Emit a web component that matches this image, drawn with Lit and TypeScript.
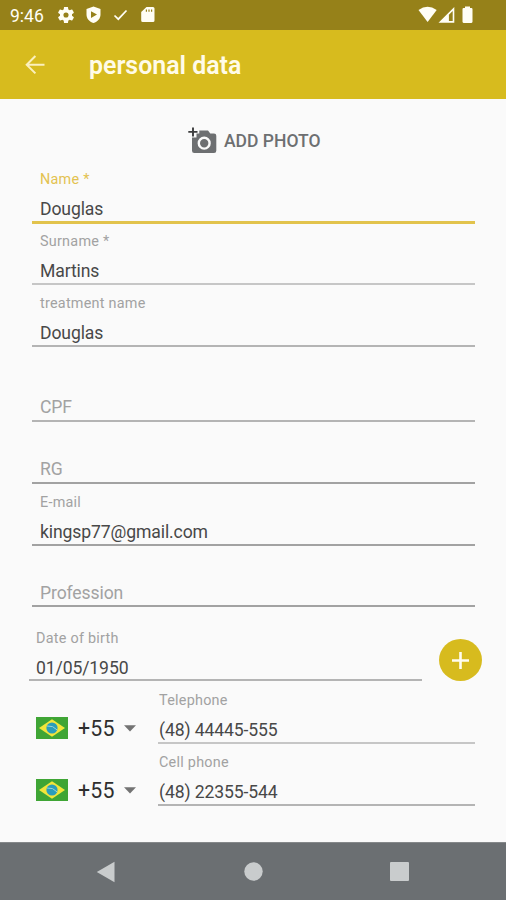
import { LitElement, html, css, svg } from "lit";
import { customElement, property } from "lit/decorators.js";
import { classMap } from "lit/directives/class-map.js";

@customElement("form-field")
class FormField extends LitElement {
  @property() label = "";
  @property() value = "";
  @property({ type: Boolean, reflect: true }) active = false;
  @property() tone = "mid";

  static styles = css`
    :host {
      display: flex;
      flex-direction: column;
      justify-content: flex-end;
      box-sizing: border-box;
      height: 61px;
    }
    .label {
      font-size: 14.4px;
      line-height: 16px;
      letter-spacing: 0.25px;
      color: #a2a2a2;
      padding-left: 8px;
      margin-bottom: 11px;
      white-space: nowrap;
    }
    .value {
      font-size: 17.6px;
      line-height: 20px;
      letter-spacing: -0.12px;
      color: #484848;
      padding: 0 0 2px 8px;
      white-space: nowrap;
    }
    .empty {
      color: #a2a2a2;
      padding-bottom: 3px;
    }
    .line {
      height: 2px;
      flex: none;
      background: #b4b4b4;
    }
    .light {
      background: #c6c6c6;
    }
    .dark {
      background: #a2a2a2;
    }
    :host([active]) .label {
      color: #e3c250;
    }
    :host([active]) .line {
      height: 3px;
      background: #e2c34c;
    }
    :host(.flush) .label,
    :host(.flush) .value {
      padding-left: 1px;
    }
    :host(.date) .label,
    :host(.date) .value {
      padding-left: 7px;
    }
    :host(.date) .value {
      padding-bottom: 1px;
    }
    :host(.low) .value {
      padding-bottom: 2px;
    }
  `;

  render() {
    return html`
      ${this.value ? html`<div class="label">${this.label}</div>` : ""}
      <div class=${classMap({ value: true, empty: !this.value })}>${this.value || this.label}</div>
      <div class=${classMap({ line: true, light: this.tone === "light", dark: this.tone === "dark" })}></div>
    `;
  }
}

const flag = svg`
  <rect width="32" height="22" fill="#3fa535"/>
  <path d="M3 11 16 2.2 29 11 16 19.8Z" fill="#f2e53a"/>
  <circle cx="16" cy="11" r="5.6" fill="#2b9dbb"/>
  <path d="M11 9q6-.8 10.2 4" fill="none" stroke="#9bd3d6" stroke-width="1"/>
`;

@customElement("app-root")
class AppRoot extends LitElement {
  static styles = css`
    :host {
      display: flex;
      flex-direction: column;
      width: 506px;
      height: 900px;
      overflow: hidden;
      background: #fafafa;
      font-family: Roboto, "Liberation Sans", sans-serif;
    }
    svg {
      display: block;
      flex: none;
    }
    .status {
      display: flex;
      align-items: center;
      height: 30px;
      flex: none;
      background: #968119;
      color: #fffef5;
      padding: 0 33px 0 10px;
      box-sizing: border-box;
    }
    .clock {
      font-size: 17.5px;
      line-height: 20px;
      width: 47px;
      padding-top: 1px;
    }
    .spacer {
      flex: 1;
    }
    .bar {
      display: flex;
      align-items: center;
      height: 69px;
      flex: none;
      box-sizing: border-box;
      padding: 2px 0 0 25px;
      background: #d7bb1e;
      color: #fffbe8;
    }
    .arrow {
      margin-bottom: 2px;
    }
    .title {
      margin-left: 44px;
      font-size: 24.9px;
      line-height: 30px;
      font-weight: 600;
    }
    .form {
      flex: 1;
      display: flex;
      flex-direction: column;
      padding: 0 31px 0 32px;
    }
    .photo {
      display: flex;
      align-items: center;
      height: 64px;
      flex: none;
      padding: 20px 0 0 156px;
      box-sizing: border-box;
      gap: 7px;
      color: #6d6f71;
      font-size: 17.5px;
      font-weight: 500;
      line-height: 24px;
    }
    .photo svg {
      margin-bottom: 2px;
    }
    .tall {
      height: 62px;
    }
    .gap {
      height: 75px;
    }
    .birth {
      display: flex;
      align-items: flex-end;
      height: 74px;
      margin-left: -3px;
    }
    .birth form-field {
      flex: none;
      width: 393px;
    }
    .add {
      flex: none;
      width: 43px;
      height: 42px;
      margin-left: 17px;
      border-radius: 50%;
      background: #d7bb1e;
      display: grid;
      place-items: center;
    }
    .phone {
      display: flex;
      align-items: flex-end;
    }
    .phone form-field {
      flex: 1;
      height: 100%;
    }
    .first {
      height: 63px;
    }
    .second {
      height: 62px;
    }
    .code {
      display: flex;
      align-items: center;
      width: 122px;
      height: 24px;
      padding: 0 0 4px 4px;
      font-size: 21.3px;
      line-height: 24px;
      color: #2e2e2e;
    }
    .dial {
      width: 46px;
      margin-left: 10px;
      padding-top: 1px;
      letter-spacing: 0.2px;
    }
    .nav {
      display: flex;
      align-items: center;
      height: 58px;
      flex: none;
      box-sizing: border-box;
      border-top: 1px solid #85888a;
      background: #6b6f72;
      padding-left: 96px;
    }
    .home {
      margin-left: 128px;
    }
    .recent {
      margin-left: 127px;
    }
  `;

  phone(label: string, value: string, cls: string, tone: string) {
    return html`
      <div class="phone ${cls}">
        <div class="code">
          <svg width="32" height="22" viewBox="0 0 32 22">${flag}</svg>
          <span class="dial">+55</span>
          <svg width="12" height="7" viewBox="0 0 12 7"><path d="M0 .3h12L6 6.5Z" fill="#737373" /></svg>
        </div>
        <form-field class="flush" .label=${label} .value=${value} .tone=${tone}></form-field>
      </div>
    `;
  }

  render() {
    return html`
      <div class="status">
        <span class="clock">9:46</span>
        <svg width="18" height="18" viewBox="0.800 0.800 22.400 22.400"><path fill="#fffef5" fill-rule="evenodd" d="M19.43 12.98c.04-.32.07-.64.07-.98s-.03-.66-.07-.98l2.11-1.65c.19-.15.24-.42.12-.64l-2-3.46c-.12-.22-.39-.3-.61-.22l-2.49 1c-.52-.4-1.08-.73-1.69-.98l-.38-2.65C14.46 2.18 14.25 2 14 2h-4c-.25 0-.46.18-.49.42l-.38 2.65c-.61.25-1.17.59-1.69.98l-2.49-1c-.23-.09-.49 0-.61.22l-2 3.46c-.13.22-.07.49.12.64l2.11 1.65c-.04.32-.07.65-.07.98s.03.66.07.98l-2.11 1.65c-.19.15-.24.42-.12.64l2 3.46c.12.22.39.3.61.22l2.49-1c.52.4 1.08.73 1.69.98l.38 2.65c.03.24.24.42.49.42h4c.25 0 .46-.18.49-.42l.38-2.65c.61-.25 1.17-.59 1.69-.98l2.49 1c.23.09.49 0 .61-.22l2-3.46c.12-.22.07-.49-.12-.64zM12 15.200a3.200 3.200 0 1 1 0-6.400 3.200 3.200 0 0 1 0 6.400z" /></svg>
        <svg width="36" height="18" viewBox="-10.500 0 36 18"><path fill="#fffef5" fill-rule="evenodd" d="M8 .5 1 3.100v5.400c0 4 2.800 7.300 7 8.600 4.200-1.300 7-4.600 7-8.600V3.100ZM5.500 5.300 11.500 8.600 5.500 12Z" /></svg>
        <svg width="56" height="18" viewBox="111 7 56 18"><path d="M114.500 16.500 118.300 20.200 126.500 11.500" fill="none" stroke="#fffef5" stroke-width="1.700" /><path fill="#fffef5" fill-rule="evenodd" d="M146.500 8h6.500q1.500 0 1.500 1.500v12q0 1.500-1.500 1.500h-10.300q-1.500 0-1.500-1.500V13ZM145.800 10.500v2.300h1.200v-2.300Zm2.600 0v2.300h1.200v-2.300Zm2.600 0v2.300h1.200v-2.300Z" /></svg>
        <span class="spacer"></span>
        <svg width="55" height="18" viewBox="418 6 55 18">
          <path fill="#fffef5" d="M418.500 10Q427.500 3.500 436.700 10L427.600 22Z" />
          <path fill="#fffef5" fill-rule="evenodd" d="M454.300 7V22.700H438.500ZM452.700 11 448.900 14.800V21.100H452.700Z" />
          <path fill="#fffef5" d="M465 6.500h5v1.600h1.400q1.100 0 1.100 1.100v12.600q0 1.100-1.100 1.100h-7.800q-1.100 0-1.100-1.100V9.200q0-1.100 1.100-1.100H465Z" />
        </svg>
      </div>
      <div class="bar">
        <svg class="arrow" width="20" height="20" viewBox="0 0 20 20"><path d="M19.500 9.700H2M10.400 1 1.700 9.700 10.400 18.400" fill="none" stroke="#fbf0bd" stroke-width="2" /></svg>
        <div class="title">personal data</div>
      </div>
      <div class="form">
        <div class="photo">
          <svg width="29" height="27" viewBox="0 0 29 27">
            <path fill="#6d6f71" fill-rule="evenodd" d="M11.300 3.500H20l2.300 3H26q2.300 0 2.300 2.300v15q0 2.300-2.300 2.300H6.300Q4 26.100 4 23.800V10.500h4.500V6.500h2.800ZM16.200 9.600a6.600 6.600 0 1 0 0 13.200 6.600 6.600 0 0 0 0-13.200Zm0 2.400a4.200 4.200 0 1 1 0 8.400 4.200 4.200 0 0 1 0-8.400Z" />
            <path d="M5 .5v9M.3 4.900h9.200" stroke="#3c3d3e" stroke-width="1.900" />
          </svg>
          <span>ADD PHOTO</span>
        </div>
        <form-field active label="Name *" value="Douglas"></form-field>
        <form-field label="Surname *" value="Martins" tone="light"></form-field>
        <form-field class="tall" label="treatment name" value="Douglas"></form-field>
        <form-field class="gap" label="CPF"></form-field>
        <form-field class="tall" label="RG" tone="dark"></form-field>
        <form-field class="tall" label="E-mail" value="kingsp77@gmail.com" tone="dark"></form-field>
        <form-field class="low" label="Profession" tone="dark"></form-field>
        <div class="birth">
          <form-field class="date" label="Date of birth" value="01/05/1950"></form-field>
          <div class="add">
            <svg width="19" height="19" viewBox="0 0 19 19"><path d="M9.500 1v17M1 9.500h17" stroke="#fffdf0" stroke-width="2.600" /></svg>
          </div>
        </div>
        ${this.phone("Telephone", "(48) 44445-555", "first", "light")}
        ${this.phone("Cell phone", "(48) 22355-544", "second", "mid")}
      </div>
      <div class="nav">
        <svg width="20" height="22" viewBox="0 0 20 22"><path d="M18.500.8v20.400L.8 11Z" fill="#c9cccd" /></svg>
        <svg class="home" width="19" height="19" viewBox="0 0 19 19"><circle cx="9.500" cy="9.500" r="9.200" fill="#c9cccd" /></svg>
        <svg class="recent" width="19" height="19" viewBox="0 0 19 19"><rect width="19" height="19" rx="1" fill="#c9cccd" /></svg>
      </div>
    `;
  }
}
